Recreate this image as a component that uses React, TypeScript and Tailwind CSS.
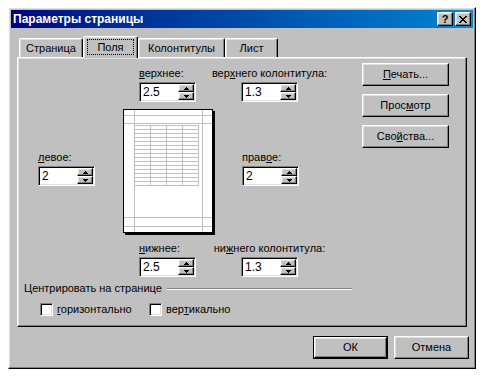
import React from 'react';

// classic 3d edges
const raised =
  'border border-t-white border-l-white border-r-black border-b-black shadow-[inset_-1px_-1px_0_#808080,inset_1px_1px_0_#dfdfdf]';
const sunken =
  'border border-t-[#808080] border-l-[#808080] border-r-white border-b-white shadow-[inset_1px_1px_0_#000,inset_-1px_-1px_0_#dfdfdf]';
const tab =
  'flex items-center justify-center border-t border-l border-r border-t-white border-l-white border-r-black rounded-t-[2px] shadow-[inset_-1px_0_0_#808080,inset_1px_1px_0_#dfdfdf]';

function Arrow({ up }: { up?: boolean }) {
    return (
        <svg width="5" height="3" viewBox="0 0 5 3" className="block">
            <path
                d={up ? 'M2 0h1v1h1v1h1v1H0V2h1V1h1z' : 'M0 0h5v1H4v1H3v1H2V2H1V1H0z'}
                fill="#000"
            />
        </svg>
    );
}

function Spin({ value }: { value: string }) {
    return (
        <div className={`w-[57px] h-[20px] bg-white flex p-[1px] ${sunken}`}>
            <div className="flex-1 flex items-center pl-[2px] text-[12px]">{value}</div>
            <div className="w-[16px] flex flex-col">
                <div className={`h-[8px] bg-[#c0c0c0] flex items-center justify-center ${raised}`}>
                    <Arrow up />
                </div>
                <div className={`h-[8px] bg-[#c0c0c0] flex items-center justify-center ${raised}`}>
                    <Arrow />
                </div>
            </div>
        </div>
    );
}

function Field({ label, value, center }: { label: React.ReactNode; value: string; center?: boolean }) {
    return (
        <div className={`flex flex-col ${center ? 'items-center w-[117px]' : 'w-[57px]'}`}>
            <span className="whitespace-nowrap h-[13px]">{label}</span>
            <div className="mt-[2px]">
                <Spin value={value} />
            </div>
        </div>
    );
}

function Button({ children, isDefault }: { children: React.ReactNode; isDefault?: boolean }) {
    if (isDefault) {
        return (
            <div className="w-[75px] h-[23px] border border-black">
                <div className={`w-full h-full flex items-center justify-center ${raised}`}>{children}</div>
            </div>
        );
    }
    return (
        <div className={`w-[75px] h-[23px] flex items-center justify-center ${raised}`}>{children}</div>
    );
}

function PagePreview() {
    const rows = Array.from({ length: 16 }, (_, i) => 16 + i * 4);
    const cols = [11, 27, 43, 59, 75];
    return (
        <svg width="92" height="126" viewBox="0 0 92 126" className="block">
            <rect x="2" y="2" width="90" height="124" fill="#000" />
            <rect x="0.5" y="0.5" width="89" height="123" fill="#fff" stroke="#000" />
            <g stroke="#c0c0c0" strokeWidth="1">
                <line x1="11.5" y1="1" x2="11.5" y2="123" />
                <line x1="79.5" y1="1" x2="79.5" y2="123" />
                <line x1="1" y1="6.5" x2="89" y2="6.5" />
                <line x1="1" y1="14.5" x2="89" y2="14.5" />
                <line x1="1" y1="108.5" x2="89" y2="108.5" />
                <line x1="1" y1="117.5" x2="89" y2="117.5" />
                {rows.map((y) => (
                    <line key={y} x1="11" y1={y + 0.5} x2="76" y2={y + 0.5} />
                ))}
                {cols.map((x) => (
                    <line key={x} x1={x + 0.5} y1="16" x2={x + 0.5} y2="77" />
                ))}
            </g>
        </svg>
    );
}

export default function App() {
    return (
        <div className="w-[486px] h-[380px] bg-white pt-[7px] pl-[8px] font-['Liberation_Sans',Arial,sans-serif] text-[11px] leading-[13px] text-black">
            <div className={`w-[468px] h-[362px] bg-[#c0c0c0] p-[2px] flex flex-col ${raised}`}>
                {/* Title bar */}
                <div className="h-[18px] flex items-center bg-linear-to-r from-[#000080] to-[#1084d0] pl-[2px] pr-[2px]">
                    <span className="flex-1 text-white font-bold text-[12px]">Параметры страницы</span>
                    <div className={`w-[16px] h-[14px] bg-[#c0c0c0] flex items-center justify-center font-bold text-[11px] leading-none ${raised}`}>
                        ?
                    </div>
                    <div className={`ml-[2px] w-[16px] h-[14px] bg-[#c0c0c0] flex items-center justify-center ${raised}`}>
                        <svg width="8" height="7" viewBox="0 0 8 7" className="block">
                            <path
                                d="M0 0h2v1h1v1h2V1h1V0h2v1H7v1H6v1H5v1h1v1h1v1h1v1H6V6H5V5H3v1H2v1H0V6h1V5h1V4h1V3H2V2H1V1H0z"
                                fill="#000"
                            />
                        </svg>
                    </div>
                </div>

                {/* Tabs */}
                <div className="mt-[8px] ml-[8px] h-[22px] -mb-[1px] flex items-end relative z-10">
                    <div className={`w-[64px] h-[19px] mb-[1px] ${tab}`}>Страница</div>
                    <div className={`w-[55px] h-[22px] !items-start pt-[2px] bg-[#c0c0c0] ${tab}`}>
                        <span className="w-[47px] h-[16px] flex items-center justify-center border border-dotted border-black">
                            Поля
                        </span>
                    </div>
                    <div className={`w-[87px] h-[19px] mb-[1px] ${tab}`}>Колонтитулы</div>
                    <div className={`w-[53px] h-[19px] mb-[1px] ${tab}`}>Лист</div>
                </div>

                {/* Tab panel */}
                <div className={`ml-[6px] w-[450px] h-[270px] flex ${raised}`}>
                    <div className="w-[344px] flex flex-col">
                        <div className="flex mt-[9px]">
                            <div className="ml-[121px]">
                                <Field label={<><u>в</u>ерхнее:</>} value="2.5" />
                            </div>
                            <div className="ml-[15px]">
                                <Field center label={<>вер<u>х</u>него колонтитула:</>} value="1.3" />
                            </div>
                        </div>

                        <div className="flex mt-[7px]">
                            <div className="ml-[20px] mt-[42px]">
                                <Field label={<><u>л</u>евое:</>} value="2" />
                            </div>
                            <div className="ml-[28px]">
                                <PagePreview />
                            </div>
                            <div className="ml-[27px] mt-[42px]">
                                <Field label={<>прав<u>о</u>е:</>} value="2" />
                            </div>
                        </div>

                        <div className="flex mt-[7px]">
                            <div className="ml-[121px]">
                                <Field label={<><u>н</u>ижнее:</>} value="2.5" />
                            </div>
                            <div className="ml-[15px]">
                                <Field center label={<>ни<u>ж</u>него колонтитула:</>} value="1.3" />
                            </div>
                        </div>

                        <div className="flex items-center ml-[6px] w-[328px] mt-[5px]">
                            <span className="whitespace-nowrap">Центрировать на странице</span>
                            <div className="flex-1 ml-[5px] h-0 border-t border-b border-t-[#808080] border-b-white" />
                        </div>

                        <div className="flex items-center mt-[8px] ml-[22px]">
                            <div className="w-[109px] flex items-center">
                                <div className={`w-[13px] h-[13px] bg-white ${sunken}`} />
                                <span className="ml-[4px]">
                                    <u>г</u>оризонтально
                                </span>
                            </div>
                            <div className="flex items-center">
                                <div className={`w-[13px] h-[13px] bg-white ${sunken}`} />
                                <span className="ml-[4px]">
                                    вер<u>т</u>икально
                                </span>
                            </div>
                        </div>
                    </div>

                    {/* side buttons */}
                    <div className="flex flex-col gap-[8px] mt-[5px]">
                        <div className={`w-[87px] h-[23px] flex items-center justify-center ${raised}`}>
                            <span>
                                <u>П</u>ечать...
                            </span>
                        </div>
                        <div className={`w-[87px] h-[23px] flex items-center justify-center ${raised}`}>
                            <span>
                                Прос<u>м</u>отр
                            </span>
                        </div>
                        <div className={`w-[87px] h-[23px] flex items-center justify-center ${raised}`}>
                            <span>
                                Сво<u>й</u>ства...
                            </span>
                        </div>
                    </div>
                </div>

                {/* dialog buttons */}
                <div className="flex justify-end gap-[6px] mt-[9px] pr-[4px]">
                    <Button isDefault>ОК</Button>
                    <Button>Отмена</Button>
                </div>
            </div>
        </div>
    );
}
